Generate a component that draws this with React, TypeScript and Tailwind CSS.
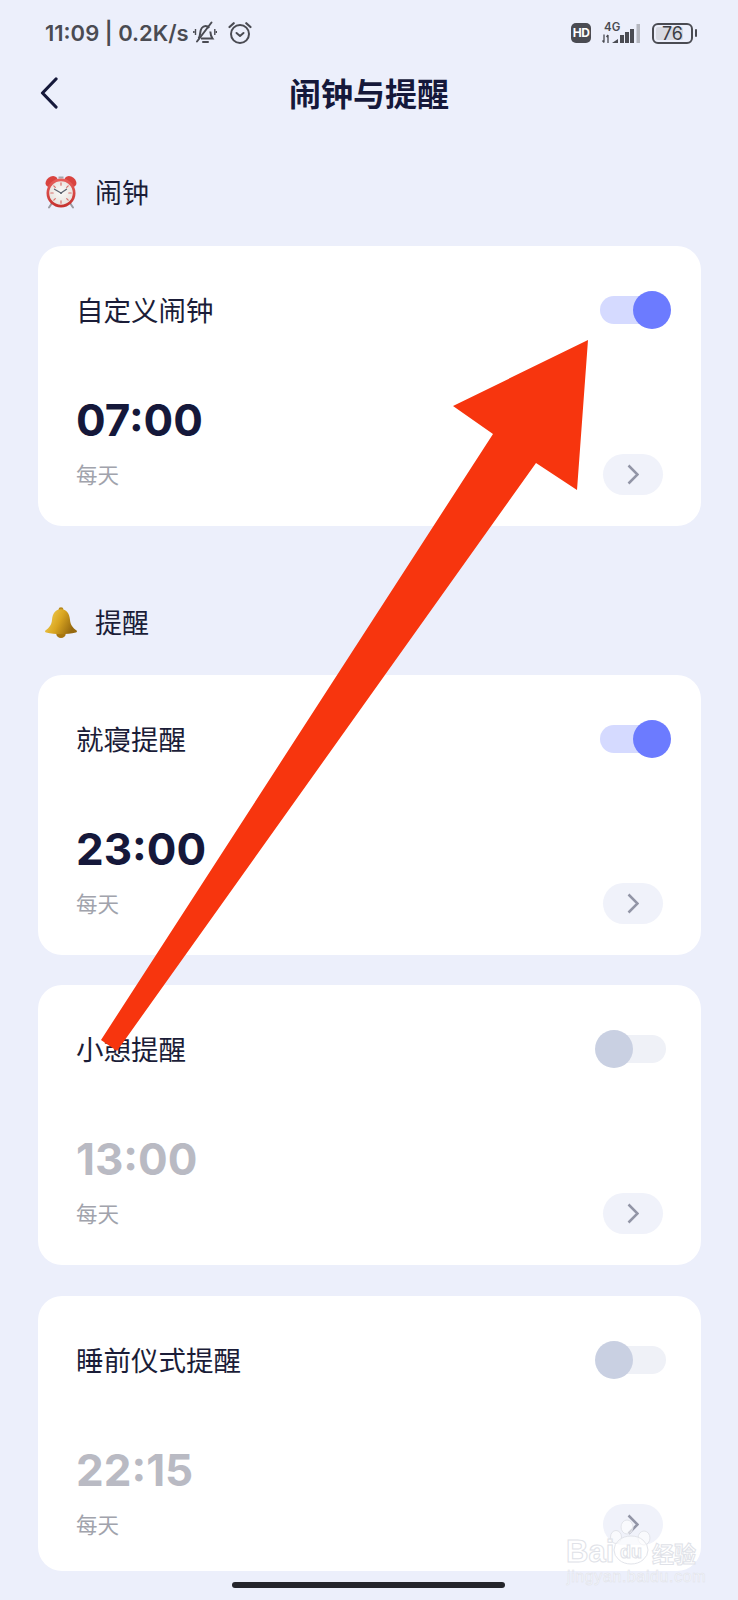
import React from 'react'

const Toggle = ({ on }: { on: boolean }) => (
  <div className="relative w-[76px] h-[38px] shrink-0">
    <div className={`absolute left-[5px] right-[5px] top-[5px] h-[28px] rounded-full ${on ? 'bg-[#d5daff]' : 'bg-[#eff1f7]'}`}></div>
    <div className={`absolute top-0 w-[38px] h-[38px] rounded-full ${on ? 'right-0 bg-[#6c7bff]' : 'left-0 bg-[#c9d0e2]'}`}></div>
  </div>
)

const AlarmCard = ({ title, time, on, short }: { title: string; time: string; on: boolean; short?: boolean }) => (
  <div className={`${short ? 'h-[275px] mt-[31px]' : 'h-[280px] mt-[30px] first:mt-0'} bg-white rounded-[24px] pl-[38px] pr-[30px] pt-[45px] flex flex-col`}>
    <div className="flex items-center justify-between h-[38px]">
      <span className="-mt-[3px] text-[27.500px] leading-[38px] text-[#1b1d38]">{title}</span>
      <Toggle on={on} />
    </div>
    <div className={`mt-[64px] h-[54px] text-[44px] leading-[54px] font-bold font-['Inter',sans-serif] tracking-[0px] ${on ? 'text-[#15183a]' : 'text-[#b9bac3]'}`}>
      {time}
    </div>
    <div className="mt-[7px] flex items-start justify-between">
      <span className="mt-[5px] text-[21.500px] leading-[30px] text-[#a1a3ac]">每天</span>
      <div className="mr-[8px] w-[60px] h-[41px] rounded-full bg-[#f0f2fa] flex items-center justify-center">
        <svg width="12" height="21" viewBox="0 0 12 21" fill="none">
          <path d="M1.500 1.500l9 9-9 9" stroke="#9295a6" strokeWidth="2.500" />
        </svg>
      </div>
    </div>
  </div>
)

const ClockEmoji = () => (
  <svg width="34" height="34" viewBox="0 0 34 34" className="shrink-0">
    <defs>
      <linearGradient id="rim" x1="0" y1="0" x2="0" y2="1">
        <stop offset="0" stopColor="#e8605c" />
        <stop offset="1" stopColor="#c5302d" />
      </linearGradient>
      <radialGradient id="dial" cx="0.5" cy="0.45" r="0.6">
        <stop offset="0" stopColor="#fbfaf8" />
        <stop offset="1" stopColor="#e6e1dc" />
      </radialGradient>
    </defs>
    <path d="M8 28l-3 4.500M26 28l3 4.500" stroke="#9b9ca3" strokeWidth="2" strokeLinecap="round" />
    <path d="M14.500 2.500h5" stroke="#a5a6ad" strokeWidth="2" />
    <ellipse cx="7.500" cy="6.500" rx="6.500" ry="4.800" fill="#d9433f" transform="rotate(-38 7.500 6.500)" />
    <ellipse cx="26.500" cy="6.500" rx="6.500" ry="4.800" fill="#d9433f" transform="rotate(38 26.500 6.500)" />
    <circle cx="17" cy="18" r="14.500" fill="url(#rim)" />
    <circle cx="17" cy="18" r="11.800" fill="url(#dial)" />
    <g stroke="#d9706c" strokeWidth="1.200" strokeLinecap="round">
      <path d="M17 7.800v2.400M17 25.800v2.400M6.800 18h2.400M24.800 18h2.400M9.800 10.800l1.500 1.500M22.700 23.700l1.500 1.500M24.200 10.800l-1.500 1.500M11.300 23.700l-1.500 1.500" />
    </g>
    <path d="M17 18l-6.500-3.800M17 18l5.500-3.800" stroke="#5d6470" strokeWidth="1.300" strokeLinecap="round" />
    <circle cx="17" cy="18" r="1.100" fill="#5d6470" />
  </svg>
)

const BellEmoji = () => (
  <svg width="34" height="33" viewBox="0 0 36 34" className="shrink-0">
    <defs>
      <linearGradient id="bell" x1="0" y1="0" x2="1" y2="0.4">
        <stop offset="0" stopColor="#f6d860" />
        <stop offset="0.55" stopColor="#d9a520" />
        <stop offset="1" stopColor="#96690f" />
      </linearGradient>
    </defs>
    <circle cx="18" cy="3.500" r="2.600" fill="#b98a1c" />
    <ellipse cx="18" cy="29" rx="5" ry="4.500" fill="#a8760f" />
    <path d="M18 3c6 0 9 4.500 9.500 11 .4 5.500 3 8.500 7 11.500.8.700.3 2-.8 2.200-5 1.300-10 1.800-15.700 1.800s-10.700-.5-15.700-1.800c-1.100-.2-1.600-1.500-.8-2.200 4-3 6.600-6 7-11.500C9 7.500 12 3 18 3z" fill="url(#bell)" />
  </svg>
)

const MutedBell = () => (
  <svg width="24" height="24" viewBox="0 0 24 24" fill="none" stroke="#4a4b52" strokeWidth="2">
    <path d="M5.500 17.500c1.300-1.300 1.500-3.500 1.700-5.500.3-3.500 2.300-7 5.300-7 1.700 0 2.800.8 3.600 2M17.300 10.500c.2 2.700.8 5 2.200 7H8" />
    <path d="M10 21h5M4 20.500L18.500 1.500" strokeLinecap="round" />
    <path d="M2.500 8v6M.8 10v2M21.800 8v6M23.500 10v2" strokeWidth="1.400" />
  </svg>
)

const AlarmIcon = () => (
  <svg width="24" height="24" viewBox="0 0 24 24" fill="none" stroke="#4a4b52" strokeWidth="2" strokeLinecap="round" strokeLinejoin="round">
    <circle cx="12" cy="13" r="9" />
    <path d="M8.500 12l3.500 3 3.500-3" />
    <path d="M1.500 6l4.200-3.800M22.500 6l-4.200-3.800" strokeWidth="2.200" />
  </svg>
)

const StatusRight = () => (
  <div className="flex items-center">
    <div className="w-[20px] h-[20px] rounded-[5px] bg-[#4a4b52] text-white text-[12px] leading-[20px] font-bold text-center font-['Inter',sans-serif] tracking-[-0.500px]">HD</div>
    <div className="relative w-[40px] h-[21px] ml-[11px]">
      <span className="absolute left-[2px] -top-[1px] text-[11.500px] leading-[10px] font-semibold text-[#4a4b52] font-['Inter',sans-serif]">4G</span>
      <svg width="40" height="21" viewBox="0 0 40 21" className="absolute left-0 top-0">
        <path d="M2 11.500v8M.5 17.500l1.500 2M6 20v-8M4.500 14l1.500-2" stroke="#4a4b52" strokeWidth="1.300" fill="none" />
        <path d="M10 20l6-4v4z" fill="#4a4b52" />
        <path d="M18 12h4v8h-4zM23 9h4v11h-4zM28 6h4v14h-4z" fill="#4a4b52" />
        <path d="M34.500 1h3.500v19h-3.500z" fill="#b5b7bf" />
      </svg>
    </div>
    <div className="ml-[10px] relative w-[41px] h-[21px] rounded-[6px] border-2 border-[#4a4b52] overflow-hidden">
      <div className="absolute left-[2px] top-[2px] bottom-[2px] w-[27px] rounded-[2px] bg-[#d8dae2]"></div>
      <span className="absolute inset-0 text-center text-[18px] leading-[17px] text-[#3c3d44] font-['Inter',sans-serif]">76</span>
    </div>
    <div className="ml-[2px] w-[2px] h-[8px] rounded-full bg-[#4a4b52]"></div>
  </div>
)

const Arrow = () => (
  <svg width="738" height="1600" viewBox="0 0 738 1600" className="absolute left-0 top-0 pointer-events-none">
    <polygon points="588,340 453,406 493,434 101,1040 117,1051 536,463 577,490" fill="#f7350e" />
  </svg>
)

const Watermark = () => (
  <div className="absolute left-[566px] top-[1518px] w-[136px] h-[68px] pointer-events-none">
    <svg width="60" height="50" viewBox="0 0 60 50" fill="rgba(255,255,255,0.6)" stroke="#e2e4ea" strokeWidth="1" className="absolute left-[42px] top-0">
      <ellipse cx="8" cy="19" rx="5.500" ry="6.500" />
      <ellipse cx="19" cy="9" rx="6" ry="7" />
      <ellipse cx="36" cy="20" rx="6" ry="7" />
      <ellipse cx="23" cy="32" rx="17" ry="14" />
    </svg>
    <span className="absolute left-0 top-[19px] text-[31px] leading-[30px] font-bold text-white/60 font-['Liberation_Sans',sans-serif] [-webkit-text-stroke:1px_#e0e2e8]">Bai</span>
    <span className="absolute left-[54px] top-[24px] text-[18px] leading-[20px] font-bold text-white/60 font-['Liberation_Sans',sans-serif] [-webkit-text-stroke:1px_#e0e2e8]">du</span>
    <span className="absolute left-[86px] top-[20px] text-[22px] leading-[28px] font-bold text-white/60 [-webkit-text-stroke:1px_#e0e2e8]">经验</span>
    <span className="absolute left-[1px] top-[51px] text-[16px] leading-[16px] tracking-[0.600px] text-white/60 font-['Liberation_Sans',sans-serif] [-webkit-text-stroke:0.500px_#e0e2e8]">jingyan.baidu.com</span>
  </div>
)

export default function App() {
  return (
    <div className="relative w-[738px] h-[1600px] overflow-hidden bg-[#eceffb] font-['Noto_Sans_CJK_SC','Noto_Sans',sans-serif] text-[#15183a]">
      <div className="h-[66px] pl-[45px] pr-[41px] flex items-center justify-between">
        <div className="flex items-center">
          <span className="text-[22px] leading-[28px] font-semibold text-[#4a4b52] font-['Inter',sans-serif]">11:09 | 0.2K/s</span>
          <div className="ml-[4px]"><MutedBell /></div>
          <div className="ml-[11px]"><AlarmIcon /></div>
        </div>
        <StatusRight />
      </div>

      <div className="relative h-[58px] pb-[6px] flex items-center justify-center">
        <svg width="18" height="32" viewBox="0 0 18 32" fill="none" className="absolute left-[40px] top-[11px]">
          <path d="M16 2L2.500 16 16 30" stroke="#15183a" strokeWidth="3.200" strokeLinecap="round" strokeLinejoin="round" />
        </svg>
        <span className="text-[32px] leading-[44px] font-bold">闹钟与提醒</span>
      </div>

      <div className="mt-[49px] pl-[44px] flex items-center h-[38px]">
        <ClockEmoji />
        <span className="ml-[17px] text-[27px] leading-[38px] text-[#1b1d38]">闹钟</span>
      </div>
      <div className="mt-[35px] ml-[38px] w-[663px]">
        <AlarmCard title="自定义闹钟" time="07:00" on />
      </div>

      <div className="mt-[77px] pl-[44px] flex items-center h-[38px]">
        <BellEmoji />
        <span className="ml-[17px] text-[27px] leading-[38px] text-[#1b1d38]">提醒</span>
      </div>
      <div className="mt-[34px] ml-[38px] w-[663px]">
        <AlarmCard title="就寝提醒" time="23:00" on />
        <AlarmCard title="小憩提醒" time="13:00" on={false} />
        <AlarmCard title="睡前仪式提醒" time="22:15" on={false} short />
      </div>

      <div className="absolute left-[232px] bottom-[12px] w-[273px] h-[6px] rounded-full bg-[#24252b]"></div>
      <Arrow />
      <Watermark />
    </div>
  )
}
